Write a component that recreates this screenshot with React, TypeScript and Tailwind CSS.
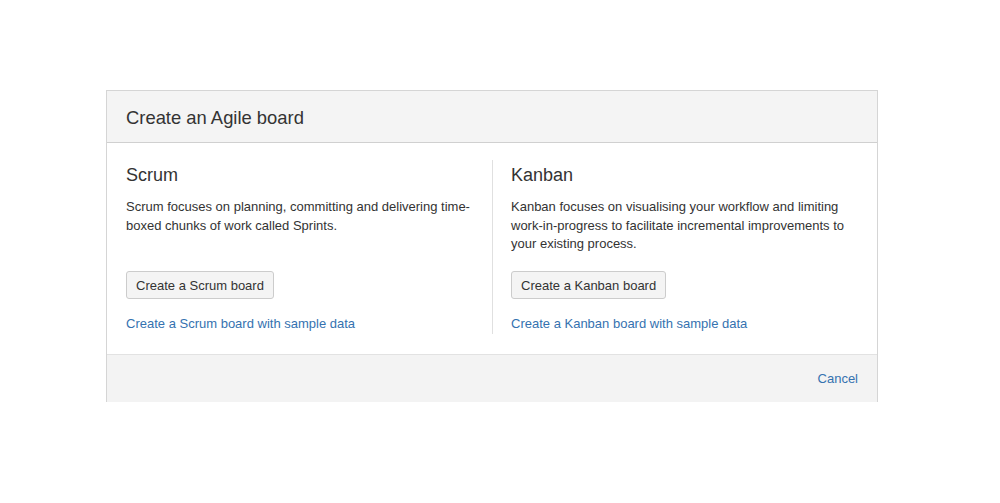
const boards = [
  {
    name: "Scrum",
    text: "Scrum focuses on planning, committing and delivering time-boxed chunks of work called Sprints.",
  },
  {
    name: "Kanban",
    text: "Kanban focuses on visualising your workflow and limiting work-in-progress to facilitate incremental improvements to your existing process.",
  },
];

const App = () => {
  return (
    <div className="min-h-[503px] bg-white pl-[106px] pt-[90px] font-['Liberation_Sans',Arial,sans-serif] text-[#333]">
      <div className="w-[772px] border-x border-t border-[#d5d5d5] bg-white">
        <div className="flex h-[52px] items-center border-b border-[#d0d0d0] bg-[#f4f4f4] px-[19px] pt-[3px]">
          <h2 className="text-[18.4px] leading-[24px] text-[#333]">Create an Agile board</h2>
        </div>

        <div className="grid grid-cols-2 px-[19px] pt-[17px] pb-[20px]">
          {boards.map((b, i) => (
            <div
              key={b.name}
              className={i === 0 ? "pr-[20px]" : "border-l border-[#e0e0e0] pl-[18px]"}
            >
              <h3 className="text-[18px] leading-[30px] text-[#333]">{b.name}</h3>
              <p className="mt-[8px] h-[56px] text-[13px] leading-[18.5px] text-[#333]">{b.text}</p>
              <button
                type="button"
                className="mt-[17px] h-[28px] rounded-[3px] border border-[#ccc] bg-[#f4f4f4] px-[9px] pt-[1px] text-[13px] text-[#333]"
              >
                Create a {b.name} board
              </button>
              <div className="mt-[16px] text-[13px] leading-[18.5px]">
                <a href="#" className="text-[#3572b0]">
                  Create a {b.name} board with sample data
                </a>
              </div>
            </div>
          ))}
        </div>

        <div className="flex h-[48px] items-center justify-end border-t border-[#e2e2e2] bg-[#f3f3f3] px-[19px] pt-[2px]">
          <a href="#" className="text-[13px] text-[#3572b0]">
            Cancel
          </a>
        </div>
      </div>
    </div>
  );
};

export default App;
